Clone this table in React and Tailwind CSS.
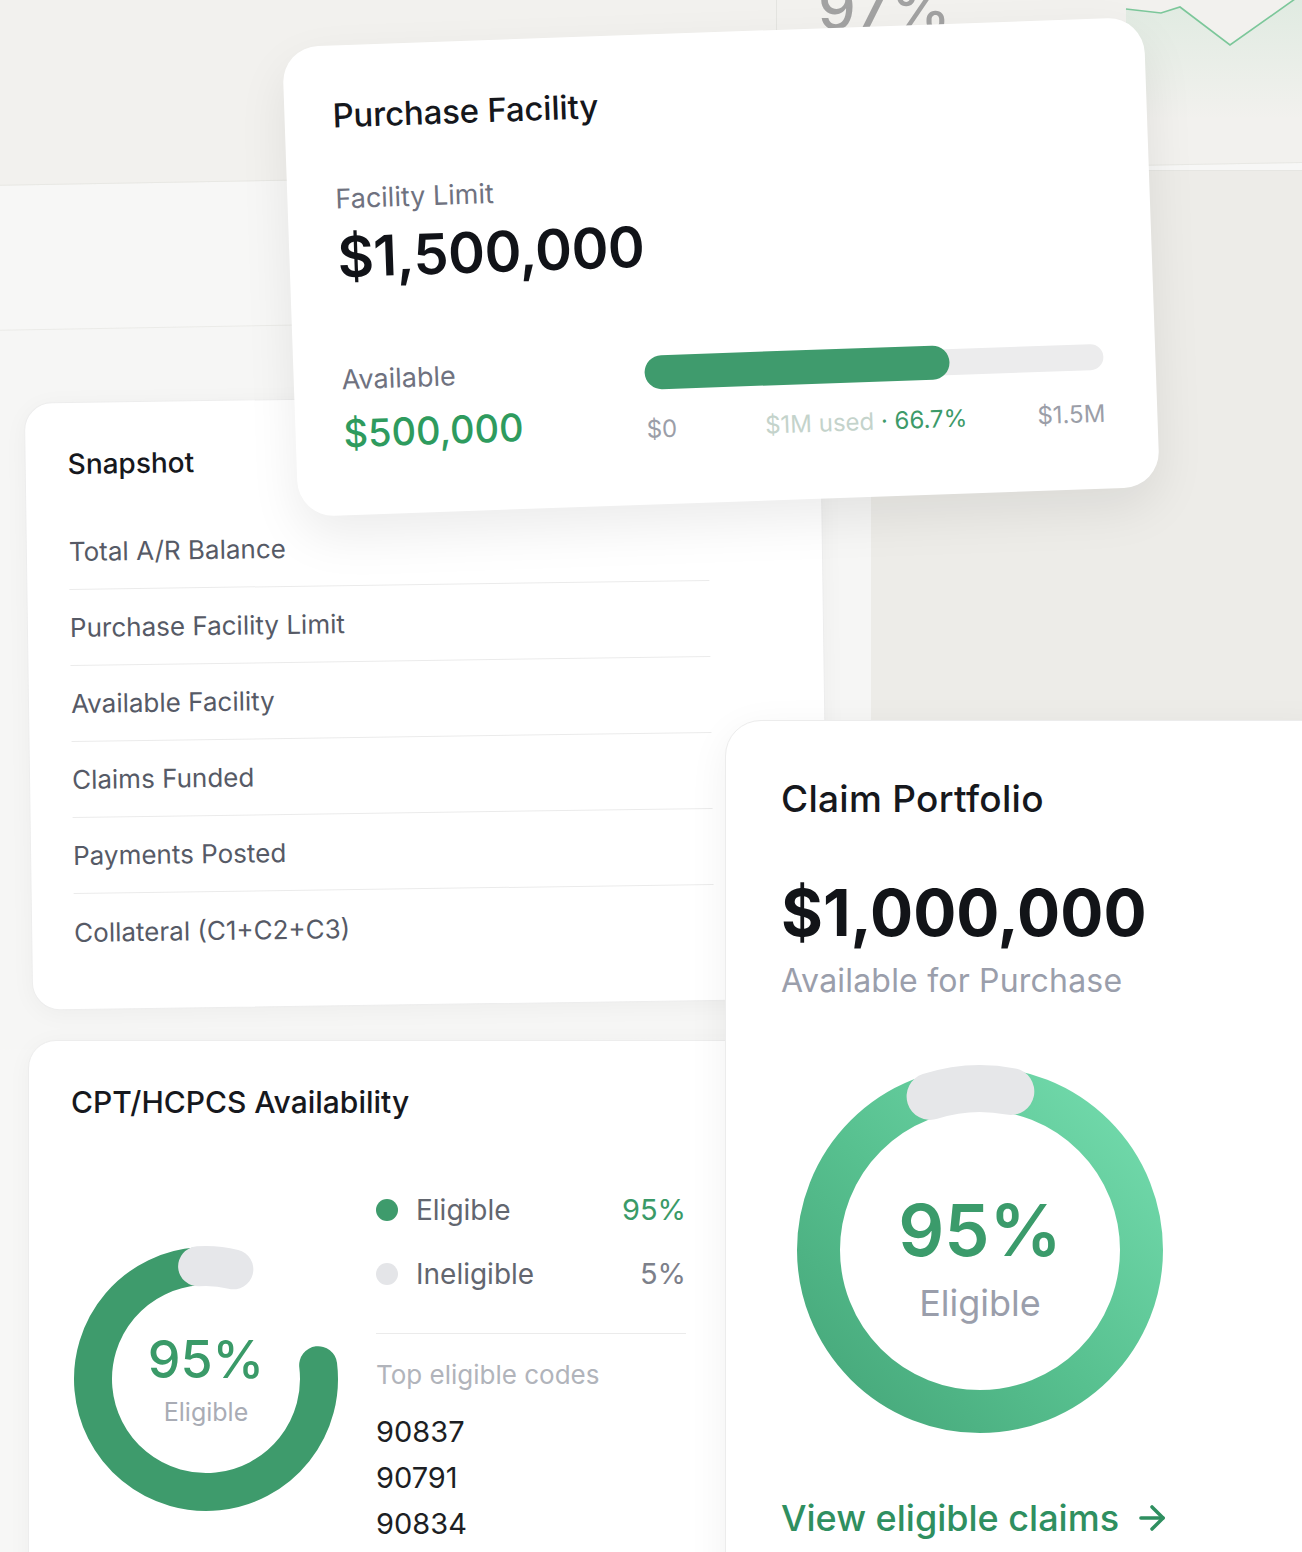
import { ArrowRight } from 'lucide-react'

// degrees measured clockwise from 12 o'clock
function arc(cx, cy, r, a0, a1) {
  const pt = (a) => [cx + r * Math.sin((a * Math.PI) / 180), cy - r * Math.cos((a * Math.PI) / 180)]
  const [x0, y0] = pt(a0)
  const [x1, y1] = pt(a1)
  const large = a1 - a0 > 180 ? 1 : 0
  return `M${x0} ${y0} A${r} ${r} 0 ${large} 1 ${x1} ${y1}`
}

const snapshotRows = [
  'Total A/R Balance',
  'Purchase Facility Limit',
  'Available Facility',
  'Claims Funded',
  'Payments Posted',
  'Collateral (C1+C2+C3)',
]

function SmallDonut() {
  return (
    <div className="relative h-[268px] w-[268px]">
      <svg width="268" height="268" viewBox="0 0 268 268" className="overflow-visible">
        <path d={arc(134, 134, 113, 83, 356)} fill="none" stroke="#3e9b6c" strokeWidth="38" strokeLinecap="round" />
        <path d={arc(134, 134, 113, -4, 14)} fill="none" stroke="#e6e7ea" strokeWidth="40" strokeLinecap="round" />
      </svg>
      <div className="absolute inset-0 flex flex-col items-center justify-center">
        <div className="text-[52px] leading-[56px] font-medium text-[#3a9a68]">95%</div>
        <div className="mt-[10px] text-[25px] leading-[28px] text-[#a9acb5]">Eligible</div>
      </div>
    </div>
  )
}

function BigDonut() {
  return (
    <div className="relative h-[366px] w-[366px]">
      <svg width="366" height="366" viewBox="0 0 366 366" className="overflow-visible">
        <defs>
          <linearGradient id="claimRing" x1="1" y1="0" x2="0" y2="1">
            <stop offset="0%" stopColor="#74dcae" />
            <stop offset="55%" stopColor="#57c08f" />
            <stop offset="100%" stopColor="#45a679" />
          </linearGradient>
        </defs>
        <circle cx="183" cy="183" r="161.5" fill="none" stroke="url(#claimRing)" strokeWidth="43" />
        <path d={arc(183, 183, 161.5, -18, 11)} fill="none" stroke="#e6e7e9" strokeWidth="47" strokeLinecap="round" />
      </svg>
      <div className="absolute inset-0 flex flex-col items-center justify-center pt-[12px]">
        <div className="text-[72px] leading-[80px] font-semibold text-[#3b9b6b]">95%</div>
        <div className="mt-[13px] text-[36px] leading-[40px] text-[#9a9eab]">Eligible</div>
      </div>
    </div>
  )
}

export default function App() {
  return (
    <div className="relative h-[1552px] w-[1302px] overflow-hidden bg-[#f7f7f6] font-[Inter,sans-serif]">
      {/* backdrop panels */}
      <div className="absolute left-[-20px] top-[-60px] h-[246px] w-[1360px] origin-bottom-left -rotate-1 border-b border-[#e8e8e4] bg-[#f2f1ee]" />
      <div className="absolute left-[-20px] top-[330px] h-[720px] w-[891px] origin-top-left -rotate-1 border-t border-[#ebebe8] bg-[#f6f6f5]" />
      <div className="absolute left-[871px] top-[170px] h-[560px] w-[431px] border-t border-[#e6e6e2] bg-[#edece8]" />

      {/* top right leftovers */}
      <div className="absolute left-[776px] top-0 h-[40px] w-px bg-[#e4e4e0]" />
      <div className="absolute left-[818px] top-[-22px] text-[60px] leading-[60px] font-medium tracking-[1px] text-[#a2a2a2]">97%</div>
      <svg className="absolute left-[1100px] top-0" width="202" height="120" viewBox="0 0 202 120">
        <defs>
          <linearGradient id="chartFill" x1="0" y1="0" x2="0" y2="1">
            <stop offset="0%" stopColor="#7cc79a" stopOpacity="0.16" />
            <stop offset="100%" stopColor="#7cc79a" stopOpacity="0" />
          </linearGradient>
        </defs>
        <polygon points="26,9 61,13 80,7 130,45 202,-6 202,120 26,120" fill="url(#chartFill)" />
        <polyline points="26,9 61,13 80,7 130,45 202,-6" fill="none" stroke="#7cc79a" strokeWidth="1.6" />
      </svg>

      {/* Snapshot */}
      <div className="absolute left-[28px] top-[397px] h-[608px] w-[797px] rotate-[-0.8deg] rounded-[28px] border border-[#ededed] bg-white px-[42px] pt-[43px] shadow-[0_4px_24px_rgba(0,0,0,0.04)]">
        <h3 className="text-[28px] leading-[36px] font-medium text-[#16181d]">Snapshot</h3>
        <div className="mt-[32px] w-[640px]">
          {snapshotRows.map((row, i) => (
            <div
              key={row}
              className={i < snapshotRows.length - 1 ? 'flex h-[76px] items-center border-b border-[#ebebeb] text-[26px] text-[#565a66]' : 'flex h-[76px] items-center text-[26px] text-[#565a66]'}
            >
              {row}
            </div>
          ))}
        </div>
      </div>

      {/* CPT/HCPCS */}
      <div className="absolute left-[28px] top-[1040px] h-[560px] w-[730px] rounded-[28px] border border-[#ededed] bg-white px-[42px] pt-[43px] shadow-[0_4px_24px_rgba(0,0,0,0.04)]">
        <h3 className="text-[30px] leading-[36px] font-medium text-[#16181d]">CPT/HCPCS Availability</h3>
        <div className="mt-[70px] flex gap-[36px]">
          <div className="ml-[1px] mt-[55px]">
            <SmallDonut />
          </div>
          <div className="w-[310px]">
            <div className="flex h-[40px] items-center">
              <span className="h-[22px] w-[22px] rounded-full bg-[#3e9b6c]" />
              <span className="ml-[18px] text-[28px] text-[#62666f]">Eligible</span>
              <span className="ml-auto text-[29px] text-[#3a9a68]">95%</span>
            </div>
            <div className="mt-[24px] flex h-[40px] items-center">
              <span className="h-[22px] w-[22px] rounded-full bg-[#e4e5e8]" />
              <span className="ml-[18px] text-[28px] text-[#62666f]">Ineligible</span>
              <span className="ml-auto text-[29px] text-[#7c808a]">5%</span>
            </div>
            <div className="mt-[39px] border-t border-[#ebebeb]" />
            <div className="mt-[25px] text-[26px] leading-[32px] text-[#b1b4bb]">Top eligible codes</div>
            <div className="mt-[23px] flex flex-col gap-[10px] text-[29px] leading-[36px] text-[#1d1f24]">
              <span>90837</span>
              <span>90791</span>
              <span>90834</span>
            </div>
          </div>
        </div>
      </div>

      {/* Claim Portfolio */}
      <div className="absolute left-[725px] top-[720px] h-[900px] w-[620px] rounded-[36px] border border-[#ececec] bg-white pl-[55px] pt-[56px] shadow-[0_10px_40px_rgba(0,0,0,0.06)]">
        <h3 className="text-[37px] leading-[44px] font-medium tracking-[0.3px] text-[#16181d]">Claim Portfolio</h3>
        <div className="mt-[56px] text-[64px] leading-[72px] font-bold text-[#121418]">$1,000,000</div>
        <div className="mt-[12px] text-[32px] leading-[40px] tracking-[0.2px] text-[#9a9eab]">Available for Purchase</div>
        <div className="ml-[16px] mt-[66px]">
          <BigDonut />
        </div>
        <div className="mt-[63px] flex items-center gap-[14px] text-[36px] leading-[44px] font-medium text-[#2f8f60]">
          View eligible claims
          <ArrowRight size={38} strokeWidth={2.2} />
        </div>
      </div>

      {/* Purchase Facility */}
      <div className="absolute left-[290px] top-[32px] h-[470px] w-[862px] -rotate-2 rounded-[36px] bg-white px-[48px] pt-[50px] shadow-[0_20px_50px_rgba(0,0,0,0.08)]">
        <h2 className="text-[33px] leading-[40px] font-medium tracking-[-0.2px] text-[#15171c]">Purchase Facility</h2>
        <div className="mt-[48px] text-[27px] leading-[32px] text-[#6f7280]">Facility Limit</div>
        <div className="mt-[10px] text-[56px] leading-[64px] font-semibold tracking-[-0.5px] text-[#111318]">$1,500,000</div>
        <div className="mt-[75px] flex">
          <div className="w-[303px]">
            <div className="text-[27px] leading-[32px] text-[#6f7280]">Available</div>
            <div className="mt-[13px] text-[38px] leading-[48px] font-medium text-[#2e9b5e]">$500,000</div>
          </div>
          <div className="mt-[2px] w-[459px]">
            <div className="relative flex h-[34px] items-center">
              <div className="h-[26px] w-full rounded-full bg-[#ececed]" />
              <div className="absolute left-0 h-[34px] w-[66.4%] rounded-full bg-[#3f9b6d]" />
            </div>
            <div className="mt-[25px] flex text-[24px] leading-[30px]">
              <span className="text-[#9b9ea8]">$0</span>
              <span className="ml-[88px]">
                <span className="text-[#c4d3cb]">$1M used</span>
                <span className="text-[#3d9a69]"> · 66.7%</span>
              </span>
              <span className="ml-auto text-[#9b9ea8]">$1.5M</span>
            </div>
          </div>
        </div>
      </div>
    </div>
  )
}
